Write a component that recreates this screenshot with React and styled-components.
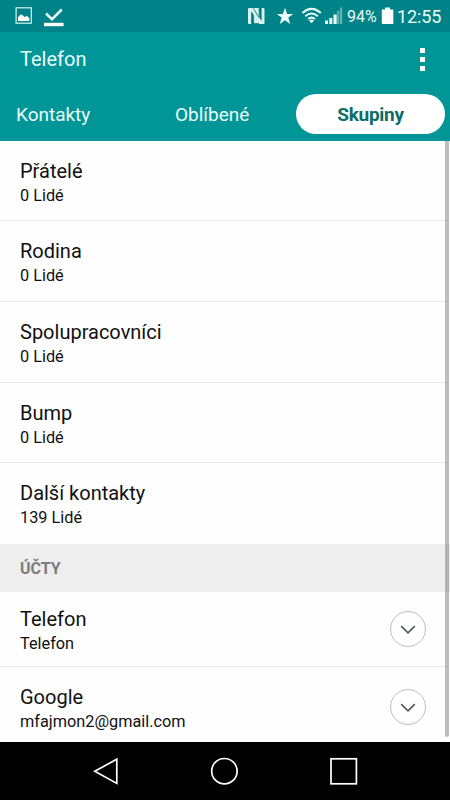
import React from 'react';
import styled, { createGlobalStyle } from 'styled-components';

const GlobalStyle = createGlobalStyle`
	* {
		box-sizing : border-box;
	}
	body {
		margin : 0;
		font-family : Roboto, "Liberation Sans", sans-serif;
		background : #fefefe;
	}
`;

const Screen = styled.div`
	width : 450px;
	height : 800px;
	display : flex;
	flex-direction : column;
	overflow : hidden;
	background : #fefefe;
`;

const StatusBar = styled.div`
	height : 32px;
	flex : none;
	display : flex;
	justify-content : space-between;
	padding-right : 7px;
	background : #008388;
	color : #e9fbfb;
`;

const Clock = styled.span`
	width : 46px;
	margin-left : 3px;
	font-size : 18px;
	line-height : 33px;
	letter-spacing : -0.1px;
	white-space : nowrap;
`;

const Percent = styled.span`
	width : 34px;
	margin-left : 4px;
	font-size : 16px;
	line-height : 33px;
	white-space : nowrap;
`;

const StatusGroup = styled.div`
	display : flex;
`;

const Header = styled.header`
	height : 108.7px;
	flex : none;
	background : #009698;
	color : #e9fbfb;
`;

const TitleRow = styled.div`
	height : 54px;
	display : flex;
	align-items : center;
	justify-content : space-between;
	padding : 0 25px 0 20px;
	font-size : 20px;
`;

const MenuButton = styled.div`
	display : grid;
	gap : 4px;
`;

const MenuDot = styled.i`
	width : 5px;
	height : 5px;
	background : #fff;
`;

const Tabs = styled.nav`
	display : flex;
	padding : 8px 5px 0 16px;
`;

const Tab = styled.div`
	width : ${props => props.$width}px;
	height : 40px;
	border-radius : 20px;
	font-size : 19px;
	line-height : 41px;
	letter-spacing : ${props => props.$active ? '-0.3px' : '-0.02px'};
	text-align : ${props => props.$active ? 'center' : 'left'};
	font-weight : ${props => props.$active ? 700 : 400};
	color : ${props => props.$active ? '#0b6e69' : 'inherit'};
	background : ${props => props.$active ? '#fff' : 'transparent'};
`;

const Content = styled.main`
	flex : 1;
	min-height : 0;
	display : flex;
	background : #fefefe;
`;

const List = styled.div`
	flex : 1;
`;

const Scrollbar = styled.div`
	width : 4px;
	height : 596px;
	margin-left : -4px;
	margin-right : 0.6px;
	z-index : 1;
	border-radius : 0 0 2px 2px;
	background : rgba(0, 0, 0, 0.25);
`;

const Row = styled.div`
	height : ${props => props.$height}px;
	display : flex;
	justify-content : space-between;
	padding : ${props => props.$top}px 23.5px 0 20px;
	border-bottom : ${props => props.$last ? 'none' : '1px solid #e9e9e9'};
	color : #111;
`;

const Name = styled.div`
	font-size : 20px;
	line-height : 24px;
`;

const Detail = styled.div`
	font-size : 16.3px;
	line-height : 20px;
	margin-top : 3px;
`;

const SectionTitle = styled.div`
	height : 48px;
	margin-right : -1px;
	padding-left : 20px;
	background : #eee;
	color : #7d7d7d;
	font-size : 16px;
	font-weight : 700;
	line-height : 49px;
`;

const ExpandButton = styled.div`
	width : 36px;
	height : 36px;
	margin-top : 4px;
	display : flex;
	align-items : center;
	justify-content : center;
	border : 1px solid #bdbdbd;
	border-radius : 50%;
`;

const NavBar = styled.footer`
	height : 58px;
	flex : none;
	background : #000;
	svg {
		display : block;
	}
`;

const groups = [
	{ name: 'Přátelé', detail: '0 Lidé', height: 80.6 },
	{ name: 'Rodina', detail: '0 Lidé', height: 80.6 },
	{ name: 'Spolupracovníci', detail: '0 Lidé', height: 80.7 },
	{ name: 'Bump', detail: '0 Lidé', height: 80.6 },
	{ name: 'Další kontakty', detail: '139 Lidé', height: 81.1, last: true },
];

const accounts = [
	{ name: 'Telefon', detail: 'Telefon', height: 74.7, top: 15 },
	{ name: 'Google', detail: 'mfajmon2@gmail.com', height: 75, top: 18, last: true },
];

function NotificationIcons() {
	return (
		<svg width="80" height="32" viewBox="0 0 80 32" fill="none">
			<rect x="16.1" y="7.8" width="15.2" height="15.4" stroke="#d5f5f3" strokeWidth="1.2" />
			<path d="M18 21V17.5L20 15Q21.5 13.8 23 15.5L24.5 17L27 16L29.3 18V21Z" fill="#fff" />
			<path d="M46 13.5L52 19.2L61.8 9.5" stroke="#e6fbfa" strokeWidth="2.5" />
			<rect x="44" y="22.8" width="19.6" height="3.4" fill="#fff" />
		</svg>
	);
}

function SystemIcons() {
	return (
		<svg width="98" height="32" viewBox="245 0 98 32" fill="none">
			<rect x="248" y="8" width="16.5" height="16" rx="1" fill="#d7f3f1" />
			<path d="M251.2 24V11.6L252.8 13L253.6 24ZM261.6 8V20.4L260 19L259 8Z" fill="#00777c" />
			<path d="M253.2 8.4L259.2 17.6V8.4M253.6 14.6V23.6L259 23.6" stroke="#00777c" strokeWidth="0.9" />
			<path d="M285 7.8L287.1 13.9H293.2L288.3 17.6L290.2 24L285 20.2L279.8 24L281.7 17.6L276.8 13.9H282.9Z" fill="#f3ffff" />
			<path d="M302.5 13Q311.5 4.8 320.8 13M305.3 16.2Q311.5 10.7 317.8 16.2M308.1 19Q311.5 16.2 315 19" stroke="#e6fbfa" strokeWidth="2" />
			<path d="M309 20.6Q311.5 18.8 314.1 20.6L311.5 23.3Z" fill="#fff" />
			<path d="M325 20.5H328V24H325ZM329.3 18H332.3V24H329.3ZM333.5 14.5H336.7V24H333.5Z" fill="#e6fbfa" />
			<path d="M337.2 10.5H339.2V24H337.2ZM340 7.5H342.2V24H340Z" fill="#5db5b5" />
		</svg>
	);
}

function BatteryIcon() {
	return (
		<svg width="13" height="32" viewBox="0 0 13 32">
			<path d="M4 7.5H9V9.5H12.3V24H.8V9.5H4Z" fill="#fff" />
		</svg>
	);
}

function Expand() {
	return (
		<ExpandButton>
			<svg width="18" height="12" viewBox="0 0 18 12" fill="none">
				<path d="M2.2 3.2L9 9.8L15.8 3.2" stroke="#565b63" strokeWidth="1.7" />
			</svg>
		</ExpandButton>
	);
}

function App() {
	return (
		<>
			<GlobalStyle />
			<Screen>
				<StatusBar>
					<NotificationIcons />
					<StatusGroup>
						<SystemIcons />
						<Percent>94%</Percent>
						<BatteryIcon />
						<Clock>12:55</Clock>
					</StatusGroup>
				</StatusBar>
				<Header>
					<TitleRow>
						<span>Telefon</span>
						<MenuButton>
							<MenuDot />
							<MenuDot />
							<MenuDot />
						</MenuButton>
					</TitleRow>
					<Tabs>
						<Tab $width={159}>Kontakty</Tab>
						<Tab $width={121}>Oblíbené</Tab>
						<Tab $width={149} $active>Skupiny</Tab>
					</Tabs>
				</Header>
				<Content>
					<List>
						{groups.map(group => (
							<Row key={group.name} $height={group.height} $top={18} $last={group.last}>
								<div>
									<Name>{group.name}</Name>
									<Detail>{group.detail}</Detail>
								</div>
							</Row>
						))}
						<SectionTitle>ÚČTY</SectionTitle>
						{accounts.map(account => (
							<Row key={account.name} $height={account.height} $top={account.top} $last={account.last}>
								<div>
									<Name>{account.name}</Name>
									<Detail>{account.detail}</Detail>
								</div>
								<Expand />
							</Row>
						))}
					</List>
					<Scrollbar />
				</Content>
				<NavBar>
					<svg width="450" height="58" viewBox="0 742 450 58" fill="none" stroke="#fff" strokeWidth="1.7">
						<path d="M116.8 759.2V783.4L94.8 771.3Z" />
						<circle cx="224.4" cy="771.2" r="12.7" />
						<rect x="331" y="758.8" width="25.4" height="25" />
					</svg>
				</NavBar>
			</Screen>
		</>
	);
}

export default App;
